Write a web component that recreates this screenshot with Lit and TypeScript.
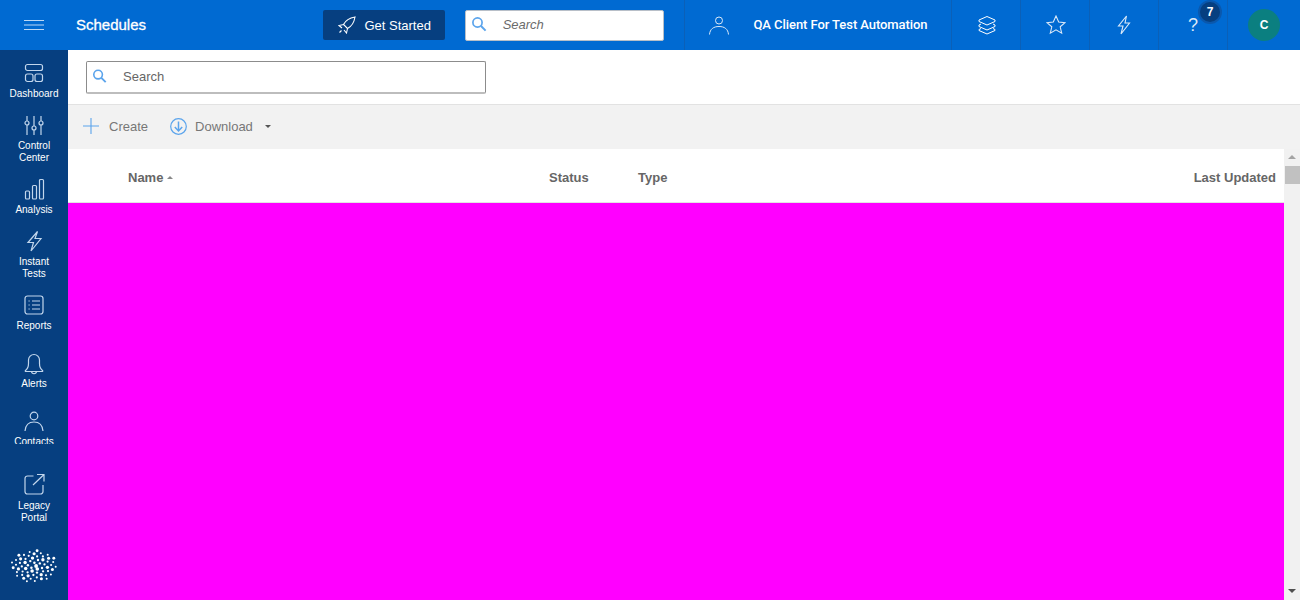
import { LitElement, html, css, svg } from 'lit';
import { customElement } from 'lit/decorators.js';

const searchIcon = html`<svg class="search-icon" viewBox="0 0 16 16" width="16" height="16" fill="none" stroke="#5ba4ec" stroke-width="1.7"><circle cx="6.5" cy="6.5" r="4.6"></circle><path d="M10 10l4.6 4.6" stroke-width="2"></path></svg>`;

const navIcons: Record<string, any> = {
    dashboard: svg`<rect x="3.5" y="3.5" width="17" height="6" rx="2"/><rect x="3.5" y="13" width="7.5" height="7.5" rx="2"/><rect x="13" y="13" width="7.5" height="7.5" rx="2"/>`,
    control: svg`<path d="M5 3v5M5 12v10M12 3v10M12 17v5M19 3v5M19 12v10"/><circle cx="5" cy="10" r="2"/><circle cx="12" cy="15" r="2"/><circle cx="19" cy="10" r="2"/>`,
    analysis: svg`<rect x="3.5" y="14" width="4" height="8" rx="1"/><rect x="10.5" y="8.5" width="4" height="13.5" rx="1"/><rect x="17.5" y="2.5" width="4" height="19.5" rx="1"/>`,
    bolt: svg`<path d="M15.500 2.500L6 13.500h5.500L9 22l10-12.500h-6z"/>`,
    reports: svg`<rect x="3" y="3" width="18" height="18" rx="2.5"/><path d="M10 8h8M10 12h8M10 16h8M6.500 8h1.200M6.500 12h1.200M6.500 16h1.200"/>`,
    alerts: svg`<path d="M3.500 19.500c2-1.500 3-3.500 3-7V9a5.500 5.500 0 0 1 11 0v3.500c0 3.500 1 5.500 3 7 .6.500.3 1-.5 1H4c-.8 0-1.100-.5-.5-1z"/><path d="M9.500 20.500c.3 3 4.700 3 5 0"/>`,
    contacts: svg`<circle cx="12" cy="7" r="3.800"/><path d="M3 22c.5-6 4-9 9-9s8.500 3 9 9"/>`,
    legacy: svg`<path d="M11.500 4H5.500a2.500 2.500 0 0 0-2.500 2.500v13A2.500 2.500 0 0 0 5.500 22h13a2.500 2.500 0 0 0 2.500-2.500V13"/><path d="M11 13L22 2.500M15 2.500h7v7"/>`,
};

const navItems = [
    { icon: 'dashboard', label: 'Dashboard' },
    { icon: 'control', label: 'Control<br>Center' },
    { icon: 'analysis', label: 'Analysis' },
    { icon: 'bolt', label: 'Instant<br>Tests' },
    { icon: 'reports', label: 'Reports', spaced: true },
    { icon: 'alerts', label: 'Alerts', spaced: true },
    { icon: 'contacts', label: 'Contacts' },
];

// sphere of dots, bigger ones near the middle
function logoDots() {
    const dots = [];
    for (let i = 0; i < 62; i++) {
        const r = Math.sqrt((i + 0.5) / 62);
        const a = i * 2.39996;
        const x = 24 + r * 23 * Math.cos(a);
        const y = 17 + r * 16 * Math.sin(a);
        const size = (i % 3 === 0 ? 1.7 : 1.15) * (1.15 - r * 0.3);
        dots.push(svg`<circle cx="${x.toFixed(1)}" cy="${y.toFixed(1)}" r="${size.toFixed(2)}"/>`);
    }
    return dots;
}

@customElement('app-root')
export class AppRoot extends LitElement {
    static styles = css`
    :host{
        display: flex;
        flex-direction: column;
        width: 1300px;
        height: 600px;
        overflow: hidden;
        font-family: "Liberation Sans", Arial, sans-serif;
        background: #fff;
    }
    .topbar{
        display: flex;
        align-items: center;
        height: 50px;
        flex: none;
        background: #006ad2;
        color: #fff;
    }
    .menu{
        width: 68px;
        display: flex;
        justify-content: center;
    }
    .title{
        width: 255px;
        padding: 0 0 2px 8px;
        box-sizing: border-box;
        font-size: 15px;
        -webkit-text-stroke: 0.3px #fff;
    }
    .start{
        width: 122px;
        height: 30px;
        box-sizing: border-box;
        padding-left: 2px;
        display: flex;
        align-items: center;
        justify-content: center;
        gap: 8px;
        background: #063f80;
        border-radius: 2px;
        font-size: 13px;
    }
    .top-search{
        width: 200px;
        height: 31px;
        margin: 0 20px;
        padding-bottom: 2px;
        box-sizing: border-box;
        display: flex;
        align-items: center;
        background: #fff;
        border: 1px solid #b8bfc8;
        border-radius: 2px;
        color: #6b6b6b;
        font-size: 13px;
        font-style: italic;
    }
    .top-search .search-icon{
        margin: 0 16px 0 5px;
    }
    .cell{
        height: 50px;
        width: 69px;
        box-sizing: border-box;
        display: flex;
        align-items: center;
        justify-content: center;
        border-left: 1px solid #0b60b8;
        position: relative;
    }
    .nudge{
        padding-left: 2px;
    }
    .client{
        width: 267px;
        justify-content: flex-start;
        padding: 0 0 1px 24px;
        gap: 24px;
        font-family: Roboto, "Liberation Sans", sans-serif;
        font-size: 13px;
        font-weight: 500;
        letter-spacing: -0.07px;
    }
    .help{
        font-size: 18px;
        color: #dbe9f8;
    }
    .badge{
        position: absolute;
        left: 41px;
        top: 2px;
        width: 20px;
        height: 20px;
        border-radius: 50%;
        background: #063f80;
        box-shadow: 0 0 0 2px #0a58ad;
        display: flex;
        align-items: center;
        justify-content: center;
        font-size: 12px;
        font-weight: 700;
        color: #fff;
    }
    .account{
        width: 73px;
        border-left: 1px solid #0b60b8;
        height: 50px;
        box-sizing: border-box;
        display: flex;
        align-items: center;
        justify-content: center;
    }
    .avatar{
        width: 32px;
        height: 32px;
        border-radius: 50%;
        background: #0b7f80;
        display: flex;
        align-items: center;
        justify-content: center;
        font-size: 12px;
        font-weight: 700;
    }
    .body{
        display: flex;
        flex: 1;
        min-height: 0;
    }
    .sidebar{
        width: 68px;
        flex: none;
        display: flex;
        flex-direction: column;
        align-items: center;
        background: #063f80;
        color: #fff;
        font-size: 10px;
        line-height: 12px;
        text-align: center;
    }
    .nav{
        height: 394px;
        width: 100%;
        padding-top: 11px;
        box-sizing: border-box;
        overflow: hidden;
        flex: none;
    }
    .nav-item{
        display: flex;
        flex-direction: column;
        align-items: center;
        gap: 3px;
        padding-bottom: 13px;
    }
    .nav-item.spaced{
        padding-bottom: 19px;
    }
    .legacy{
        margin-top: 28px;
        gap: 4px;
        padding-bottom: 25px;
    }
    .nav-icon{
        width: 24px;
        height: 24px;
        fill: none;
        stroke: #c2d6ec;
        stroke-width: 1.2;
    }
    .logo{
        width: 48px;
        height: 34px;
        flex: none;
        fill: #fff;
    }
    .main{
        flex: 1;
        min-width: 0;
        display: flex;
        flex-direction: column;
    }
    .filter{
        height: 55px;
        flex: none;
        box-sizing: border-box;
        padding: 11px 18px;
        border-bottom: 1px solid #e2e2e2;
    }
    .filter-input{
        width: 400px;
        height: 33px;
        box-sizing: border-box;
        display: flex;
        align-items: center;
        padding-bottom: 2px;
        border: 1px solid #8c8c8c;
        border-bottom-width: 2px;
        border-bottom-color: #bdbdbd;
        border-radius: 2px;
        color: #666;
        font-size: 13px;
    }
    .filter-input .search-icon{
        margin: 0 16px 0 5px;
        width: 15px;
    }
    .toolbar{
        height: 44px;
        flex: none;
        display: flex;
        align-items: center;
        padding-left: 14px;
        padding-bottom: 2px;
        box-sizing: border-box;
        background: #f2f2f2;
        color: #777;
        font-size: 13px;
    }
    .tool{
        display: flex;
        align-items: center;
        gap: 9px;
    }
    .tool + .tool{
        margin-left: 22px;
        gap: 8px;
    }
    .caret{
        width: 0;
        height: 0;
        border-left: 3px solid transparent;
        border-right: 3px solid transparent;
        border-top: 3px solid #555;
        margin-left: 4px;
    }
    .grid{
        flex: 1;
        min-height: 0;
        display: flex;
    }
    .table{
        flex: 1;
        display: flex;
        flex-direction: column;
    }
    .thead{
        height: 54px;
        flex: none;
        box-sizing: border-box;
        display: flex;
        align-items: center;
        padding: 3px 8px 0 60px;
        border-bottom: 1px solid #e4e4e4;
        color: #666;
        font-size: 13px;
        font-weight: 700;
    }
    .col-name{
        width: 421px;
        display: flex;
        align-items: center;
        gap: 4px;
    }
    .sort{
        width: 0;
        height: 0;
        border-left: 3px solid transparent;
        border-right: 3px solid transparent;
        border-bottom: 3px solid #888;
    }
    .col-status{
        width: 89px;
    }
    .col-updated{
        margin-left: auto;
    }
    .rows{
        flex: 1;
        background: #ff00ff;
    }
    .scrollbar{
        width: 16px;
        flex: none;
        display: flex;
        flex-direction: column;
        align-items: center;
        background: #f1f1f1;
    }
    .arrow-up, .arrow-down{
        width: 0;
        height: 0;
        border-left: 4px solid transparent;
        border-right: 4px solid transparent;
    }
    .arrow-up{
        margin-top: 6px;
        border-bottom: 4px solid #a3a3a3;
    }
    .thumb{
        width: 15px;
        height: 18px;
        margin-top: 7px;
        background: #c1c1c1;
    }
    .arrow-down{
        margin-top: auto;
        margin-bottom: 7px;
        border-top: 4px solid #505050;
    }
    `;

    render() {
        return html`
        <div class="topbar">
            <div class="menu">
                <svg width="20" height="12" viewBox="0 0 20 12" stroke="#bcd8f5" stroke-width="1.2"><path d="M0 1.500h20M0 6h20M0 10.500h20"></path></svg>
            </div>
            <div class="title">Schedules</div>
            <div class="start">
                <svg width="18" height="18" viewBox="0 0 18 18" fill="none" stroke="#fff" stroke-width="1.100"><path d="M17 1C11 2 7.500 4.500 5.500 8.500l4 4C13.500 10.500 16 7 17 1zM5.500 8.500L1 9.500l3 2.500M9.500 12.500L8.500 17 6 14M3.500 14.500l-2 2"></path></svg>
                Get Started
            </div>
            <div class="top-search">${searchIcon}Search</div>
            <div class="cell client">
                <svg width="20" height="20" viewBox="0 0 20 20" fill="none" stroke="#dbe9f8" stroke-width="1"><circle cx="10" cy="5.500" r="3.500"></circle><path d="M.5 19.500C1 14 4.500 11.500 10 11.500s9 2.500 9.500 8"></path></svg>
                QA Client For Test Automation
            </div>
            <div class="cell nudge">
                <svg width="20" height="20" viewBox="0 0 20 20" fill="none" stroke="#fff" stroke-width="1"><path d="M10 1.500l8 3.500v1.500L10 10 2 6.500V5zM4 9l-2 1v1.500L10 15l8-3.500V10l-2-1M4 13.500l-2 1V15.500L10 19l8-3.500v-1l-2-1"></path></svg>
            </div>
            <div class="cell nudge">
                <svg width="20" height="20" viewBox="0 0 20 20" fill="none" stroke="#dbe9f8" stroke-width="1.100"><path d="M10 1l2.700 6 6.300.6-4.800 4.200 1.500 6.400L10 14.800l-5.700 3.400 1.500-6.400L1 7.600 7.300 7z"></path></svg>
            </div>
            <div class="cell">
                <svg width="20" height="20" viewBox="0 0 20 20" fill="none" stroke="#dbe9f8" stroke-width="1.100"><path d="M12.500 1L4.500 11h4.500L7 19l8.500-11H11z"></path></svg>
            </div>
            <div class="cell help">?<span class="badge">7</span></div>
            <div class="account"><div class="avatar">C</div></div>
        </div>
        <div class="body">
            <div class="sidebar">
                <div class="nav">
                    ${navItems.map((item) => html`
                    <div class="nav-item ${item.spaced ? 'spaced' : ''}">
                        <svg class="nav-icon" viewBox="0 0 24 24">${navIcons[item.icon]}</svg>
                        <span .innerHTML="${item.label}"></span>
                    </div>`)}
                </div>
                <div class="nav-item legacy">
                    <svg class="nav-icon" viewBox="0 0 24 24">${navIcons.legacy}</svg>
                    <span>Legacy<br>Portal</span>
                </div>
                <svg class="logo" viewBox="0 0 48 34">${logoDots()}</svg>
            </div>
            <div class="main">
                <div class="filter">
                    <div class="filter-input">${searchIcon}Search</div>
                </div>
                <div class="toolbar">
                    <div class="tool">
                        <svg width="18" height="18" viewBox="0 0 18 18" stroke="#5ba4ec" stroke-width="1.100"><path d="M9 1v16M1 9h16"></path></svg>
                        Create
                    </div>
                    <div class="tool">
                        <svg width="17" height="17" viewBox="0 0 17 17" fill="none" stroke="#5ba4ec" stroke-width="1.200"><circle cx="8.500" cy="8.500" r="7.800"></circle><path d="M8.500 3.500v9.500M4.800 9l3.700 4 3.700-4" stroke-width="1.500"></path></svg>
                        Download
                        <span class="caret"></span>
                    </div>
                </div>
                <div class="grid">
                    <div class="table">
                        <div class="thead">
                            <div class="col-name">Name <span class="sort"></span></div>
                            <div class="col-status">Status</div>
                            <div>Type</div>
                            <div class="col-updated">Last Updated</div>
                        </div>
                        <div class="rows"></div>
                    </div>
                    <div class="scrollbar">
                        <div class="arrow-up"></div>
                        <div class="thumb"></div>
                        <div class="arrow-down"></div>
                    </div>
                </div>
            </div>
        </div>`;
    }
}
